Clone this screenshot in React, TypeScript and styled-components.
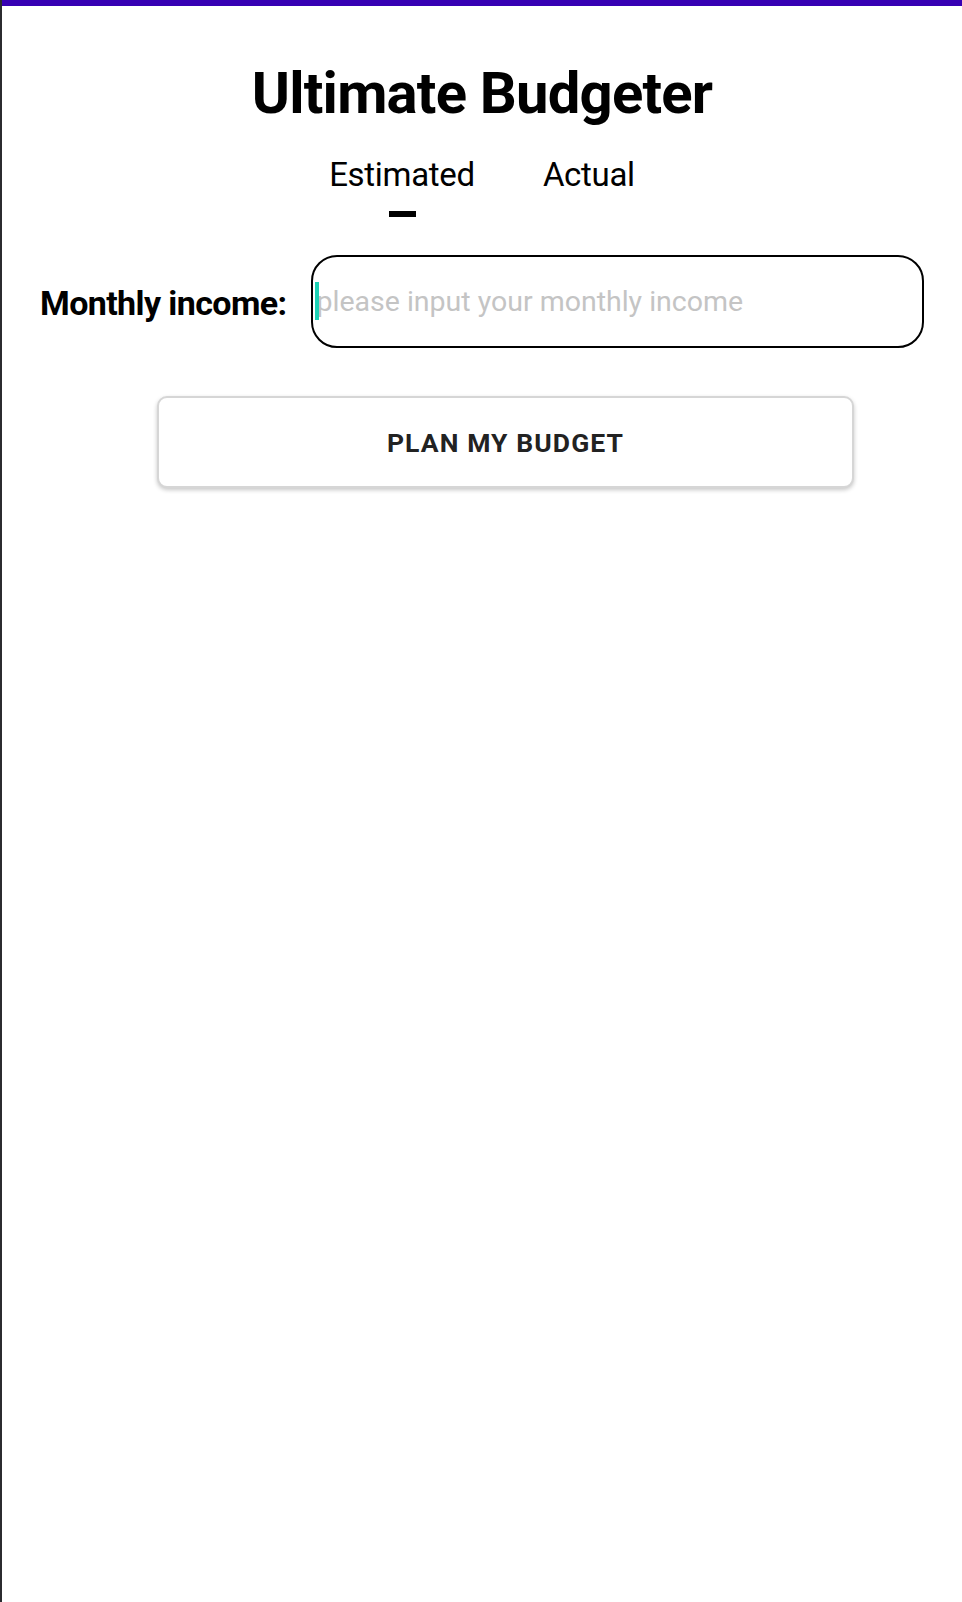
import styled, { createGlobalStyle } from 'styled-components'

const GlobalStyle = createGlobalStyle`
  html, body {
    margin: 0;
    padding: 0;
    background: #ffffff;
  }
  body {
    font-family: Roboto, 'Liberation Sans', sans-serif;
  }
`

const Screen = styled.div({
  display: 'flex',
  minHeight: '1602px',
  borderLeft: '2px solid #2b2b2f',
  boxSizing: 'border-box'
})

const Content = styled.div({
  flex: 1,
  display: 'flex',
  flexDirection: 'column'
})

const StatusBar = styled.div({
  height: '6px',
  backgroundColor: '#3700b3'
})

const Title = styled.h1({
  margin: '53px 0 0',
  textAlign: 'center',
  fontSize: '58px',
  fontWeight: 700,
  letterSpacing: '-0.8px',
  lineHeight: 'normal',
  color: '#000000'
})

const Tabs = styled.div({
  display: 'flex',
  justifyContent: 'center',
  gap: '68px',
  marginTop: '28px'
})

const Tab = styled.div({
  display: 'flex',
  flexDirection: 'column',
  alignItems: 'center'
})

const TabLabel = styled.span({
  fontSize: '33px',
  letterSpacing: '-0.3px',
  lineHeight: 'normal',
  color: '#000000'
})

const Indicator = styled.div<{ $active?: boolean }>(({ $active }) => ({
  marginTop: '17px',
  width: '27px',
  height: '6px',
  backgroundColor: $active ? '#000000' : 'transparent'
}))

const IncomeRow = styled.div({
  display: 'flex',
  alignItems: 'center',
  gap: '25px',
  padding: '38px 38px 0 38px'
})

const Label = styled.label({
  fontSize: '34px',
  fontWeight: 700,
  letterSpacing: '-0.6px',
  lineHeight: 'normal',
  color: '#000000',
  whiteSpace: 'nowrap',
  paddingTop: '3px'
})

const InputBox = styled.div({
  position: 'relative',
  flex: 1,
  display: 'flex'
})

const Input = styled.input({
  flex: 1,
  height: '93px',
  boxSizing: 'border-box',
  border: '2.5px solid #000000',
  borderRadius: '26px',
  padding: '0 0 0 3px',
  fontFamily: 'Roboto, sans-serif',
  fontSize: '28.5px',
  color: '#000000',
  outline: 'none',
  background: '#ffffff',
  '&::placeholder': {
    color: '#c4c4c4'
  }
})

const Caret = styled.span({
  position: 'absolute',
  left: '4px',
  top: '27px',
  width: '4px',
  height: '38px',
  backgroundColor: '#1dd1b5'
})

const ButtonRow = styled.div({
  display: 'flex',
  padding: '48px 0 0 155px'
})

const PlanButton = styled.button({
  width: '697px',
  height: '92px',
  boxSizing: 'border-box',
  background: '#ffffff',
  border: '2px solid #d6d6d6',
  borderRadius: '10px',
  boxShadow: '0 2px 4px rgba(0, 0, 0, 0.22)',
  fontFamily: 'Roboto, sans-serif',
  fontSize: '26.5px',
  fontWeight: 700,
  color: '#222222',
  letterSpacing: '1.1px',
  cursor: 'pointer'
})

const App = () => {
  return (
    <>
      <GlobalStyle />
      <Screen>
        <Content>
          <StatusBar />
          <Title>Ultimate Budgeter</Title>
          <Tabs>
            <Tab>
              <TabLabel>Estimated</TabLabel>
              <Indicator $active />
            </Tab>
            <Tab>
              <TabLabel>Actual</TabLabel>
              <Indicator />
            </Tab>
          </Tabs>
          <IncomeRow>
            <Label htmlFor="income">Monthly income:</Label>
            <InputBox>
              <Input id="income" placeholder="please input your monthly income" />
              <Caret />
            </InputBox>
          </IncomeRow>
          <ButtonRow>
            <PlanButton>PLAN MY BUDGET</PlanButton>
          </ButtonRow>
        </Content>
      </Screen>
    </>
  )
}

export default App
